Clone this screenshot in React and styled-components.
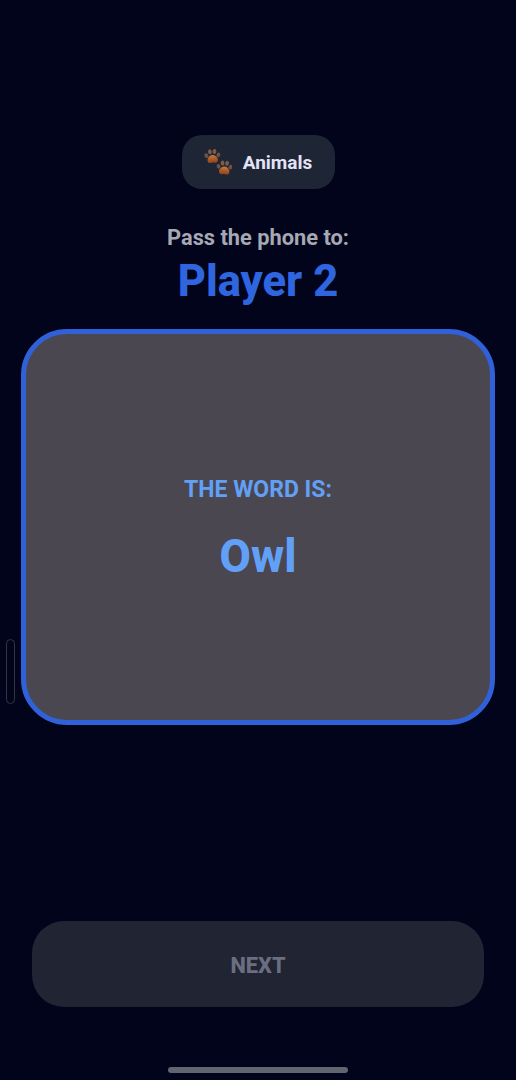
import React from "react";
import styled, { createGlobalStyle } from "styled-components";

const GlobalStyle = createGlobalStyle`
  html, body {
    margin: 0;
    padding: 0;
    background: #01041a;
  }
  body {
    font-family: Roboto, "Liberation Sans", sans-serif;
  }
`;

const Screen = styled.div`
  position: relative;
  width: 516px;
  height: 1080px;
  overflow: hidden;
  background: #01041a;
  display: flex;
  flex-direction: column;
  align-items: center;
  padding-top: 135px;
  box-sizing: border-box;
`;

const CategoryPill = styled.div`
  width: 153px;
  height: 54px;
  box-sizing: border-box;
  border-radius: 20px;
  background: #1e2535;
  display: flex;
  align-items: center;
  justify-content: center;
  gap: 11px;
  color: #e3e3f8;
  font-size: 19px;
  font-weight: 700;
`;

const PassLabel = styled.div`
  margin-top: 37px;
  height: 24px;
  line-height: 24px;
  color: #a6a8b4;
  font-size: 21.8px;
  font-weight: 700;
`;

const PlayerName = styled.div`
  margin-top: 7px;
  height: 50px;
  line-height: 50px;
  color: #2f66e0;
  font-size: 43.5px;
  font-weight: 800;
`;

const WordCard = styled.div`
  margin-top: 22px;
  width: 474px;
  height: 396px;
  box-sizing: border-box;
  border: 5px solid #3161d8;
  border-radius: 46px;
  background: #4a4751;
  display: flex;
  flex-direction: column;
  align-items: center;
  padding-top: 143px;
`;

const WordLabel = styled.div`
  height: 26px;
  line-height: 26px;
  color: #62a0f5;
  font-size: 23px;
  font-weight: 700;
`;

const Word = styled.div`
  margin-top: 26px;
  height: 56px;
  line-height: 56px;
  color: #62a0f8;
  font-size: 45.5px;
  font-weight: 800;
`;

const NextButton = styled.button`
  margin-top: 196px;
  width: 452px;
  height: 86px;
  border: none;
  border-radius: 32px;
  background: #202433;
  color: #6b6e80;
  font-family: inherit;
  font-size: 21.8px;
  font-weight: 800;
  padding: 2px 0 0;
`;

const SideHandle = styled.div`
  position: absolute;
  left: 6px;
  top: 639px;
  width: 9px;
  height: 65px;
  box-sizing: border-box;
  border: 1px solid #34353f;
  border-radius: 5px;
`;

const HomeIndicator = styled.div`
  position: absolute;
  left: 168px;
  bottom: 7px;
  width: 180px;
  height: 6px;
  border-radius: 3px;
  background: #62656f;
`;

const Paw = ({ x, y, rotate }) => (
  <g transform={`translate(${x} ${y}) rotate(${rotate})`}>
    <ellipse cx="-6" cy="-1.2" rx="1.9" ry="2.4" fill="#6e5344" transform="rotate(-25 -6 -1.2)" />
    <ellipse cx="-2.3" cy="-4.8" rx="1.9" ry="2.5" fill="#7a5c4a" transform="rotate(-8 -2.3 -4.8)" />
    <ellipse cx="2.3" cy="-4.8" rx="1.9" ry="2.5" fill="#7a5c4a" transform="rotate(8 2.3 -4.8)" />
    <ellipse cx="6" cy="-1.2" rx="1.9" ry="2.4" fill="#6e5344" transform="rotate(25 6 -1.2)" />
    <path d="M0 -1.4c2.8 0 5.2 2.8 5.2 5 0 2.2-1.7 3-3.2 2.7-.8-.2-1.3-.4-2-.4s-1.2.2-2 .4c-1.5.3-3.2-.5-3.2-2.7 0-2.2 2.4-5 5.2-5z" fill="url(#padFill)" />
  </g>
);

const PawIcon = () => (
  <svg width="28" height="26" viewBox="0 0 28 26">
    <defs>
      <linearGradient id="padFill" x1="0" y1="0" x2="0" y2="1">
        <stop offset="0" stopColor="#c97a35" />
        <stop offset="1" stopColor="#8f401e" />
      </linearGradient>
    </defs>
    <Paw x={8.5} y={7.5} rotate={-4} />
    <Paw x={20.5} y={19} rotate={4} />
  </svg>
);

export default function App() {
  return (
    <>
      <GlobalStyle />
      <Screen>
        <CategoryPill>
          <PawIcon />
          Animals
        </CategoryPill>
        <PassLabel>Pass the phone to:</PassLabel>
        <PlayerName>Player 2</PlayerName>
        <WordCard>
          <WordLabel>THE WORD IS:</WordLabel>
          <Word>Owl</Word>
        </WordCard>
        <NextButton>NEXT</NextButton>
        <SideHandle />
        <HomeIndicator />
      </Screen>
    </>
  );
}
